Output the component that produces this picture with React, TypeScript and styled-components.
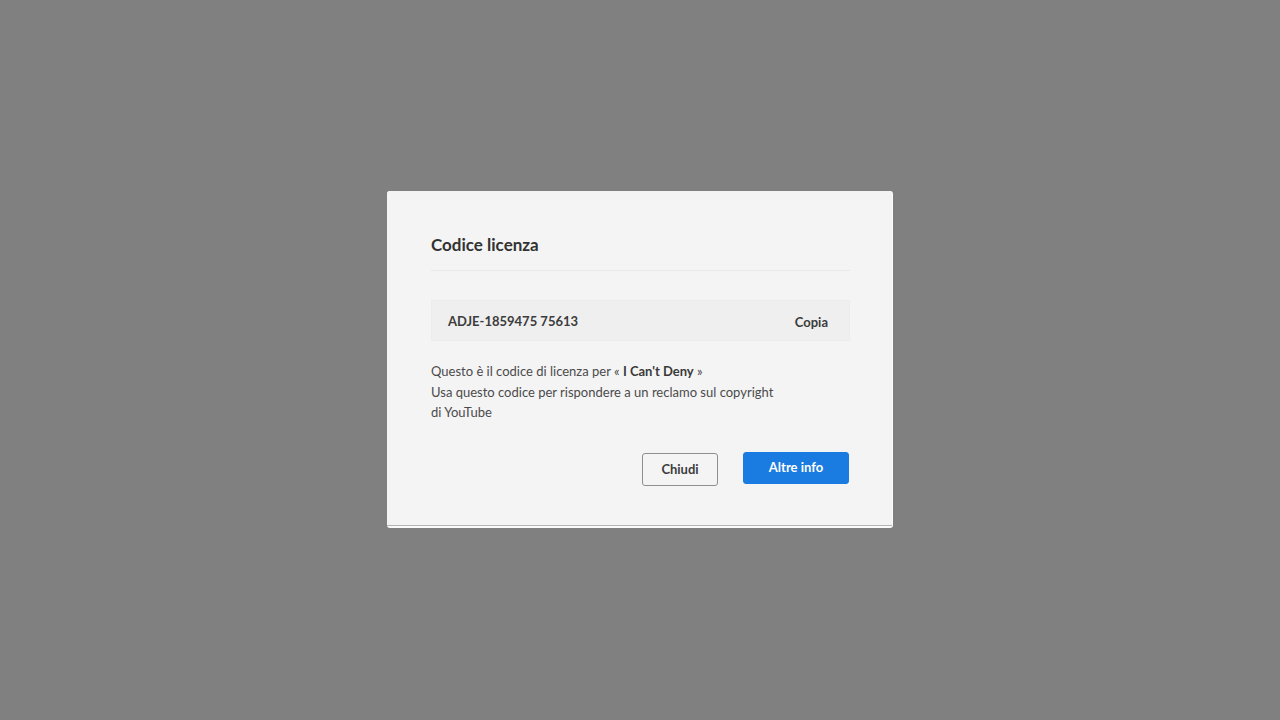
import React from "react";
import styled, { createGlobalStyle } from "styled-components";

const Global = createGlobalStyle`
  html, body { margin: 0; padding: 0; }
  body { background: #808080; font-family: Lato, "Open Sans", sans-serif; }
`;

const Page = styled.div`
  width: 1280px;
  height: 720px;
  display: flex;
  justify-content: center;
  padding-top: 191px;
  box-sizing: border-box;
`;

const Dialog = styled.div`
  width: 506px;
  height: 337px;
  background: #fbfbfb;
  border-radius: 3px;
  box-sizing: border-box;
  padding: 0 1px 3px 0;
  display: flex;
`;

const Panel = styled.div`
  flex: 1;
  background: #f4f4f4;
  border-radius: 3px 3px 0 0;
  box-shadow: 0 1px 0 #b4b4b4;
  padding: 42px 42px 0 44px;
  box-sizing: border-box;
  display: flex;
  flex-direction: column;
`;

const Title = styled.h2`
  margin: 0;
  font-size: 17px;
  font-weight: 700;
  color: #323232;
  line-height: 24px;
  padding-bottom: 13px;
  border-bottom: 1px solid #e9e9e9;
`;

const CodeBox = styled.div`
  margin-top: 29px;
  height: 41px;
  background: #efefef;
  border: 1px dotted #e9e9e9;
  box-sizing: border-box;
  display: flex;
  align-items: center;
  justify-content: space-between;
  padding: 0 21px 0 16px;
`;

const Code = styled.span`
  font-size: 13px;
  font-weight: 700;
  color: #3c3c3c;
`;

const CopyLink = styled.span`
  font-size: 13px;
  font-weight: 700;
  color: #3c3c3c;
  padding-top: 2px;
`;

const Body = styled.p`
  margin: 20px 0 0;
  max-width: 352px;
  font-size: 13px;
  line-height: 20.5px;
  color: #4b4b4b;
`;

const Strong = styled.b`
  font-weight: 700;
  color: #3a3a3a;
`;

const Actions = styled.div`
  margin-top: 29px;
  display: flex;
  justify-content: flex-end;
  align-items: flex-start;
  gap: 25px;
  padding-right: 1px;
`;

const Button = styled.button<{ $primary?: boolean }>`
  font-family: Lato, "Open Sans", sans-serif;
  font-size: 13px;
  font-weight: 700;
  border-radius: 3px;
  box-sizing: border-box;
  cursor: pointer;
  width: ${(p) => (p.$primary ? "106px" : "76px")};
  height: ${(p) => (p.$primary ? "32px" : "33px")};
  margin-top: ${(p) => (p.$primary ? "0" : "1px")};
  background: ${(p) => (p.$primary ? "#1a7be0" : "transparent")};
  color: ${(p) => (p.$primary ? "#ffffff" : "#3c3c3c")};
  border: 1px solid ${(p) => (p.$primary ? "#1a7be0" : "#8e8e8e")};
  padding: 0 0 ${(p) => (p.$primary ? "1px" : "0")};
`;

export default function App() {
  return (
    <>
      <Global />
      <Page>
        <Dialog>
          <Panel>
            <Title>Codice licenza</Title>
            <CodeBox>
              <Code>ADJE-1859475 75613</Code>
              <CopyLink>Copia</CopyLink>
            </CodeBox>
            <Body>
              Questo è il codice di licenza per « <Strong>I Can't Deny</Strong> »
              <br />
              Usa questo codice per rispondere a un reclamo sul copyright di
              YouTube
            </Body>
            <Actions>
              <Button>Chiudi</Button>
              <Button $primary>Altre info</Button>
            </Actions>
          </Panel>
        </Dialog>
      </Page>
    </>
  );
}
